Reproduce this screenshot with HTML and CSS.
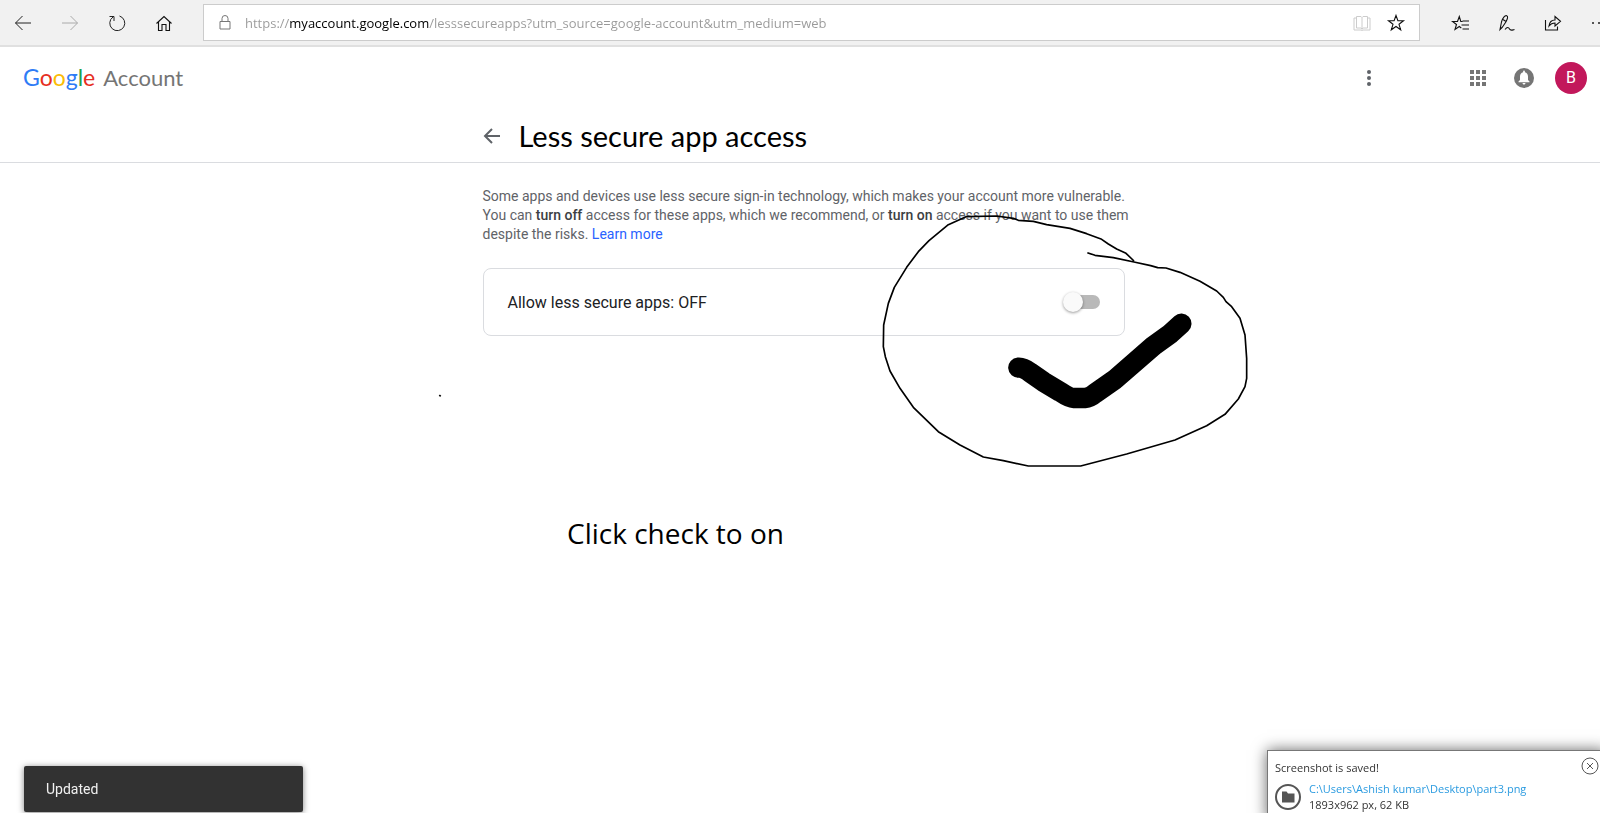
FILE: index.html
```html
<!DOCTYPE html>
<html lang="en">
<head>
    <meta charset="UTF-8">
    <meta name="viewport" content="width=device-width, initial-scale=1.0">
    <title>Less secure app access</title>
    <link rel="stylesheet" href="styles.css">
</head>
<body>
    <div class="window">
        <div class="toolbar">
            <div class="nav-buttons">
                <button class="tool-btn" aria-label="Back"><svg width="20" height="20" viewBox="0 0 20 20"><path d="M18 10H2.500M9.500 3 2.500 10l7 7"/></svg></button>
                <button class="tool-btn disabled" aria-label="Forward" disabled><svg width="20" height="20" viewBox="0 0 20 20"><path d="M2 10h15.500M10.500 3l7 7-7 7"/></svg></button>
                <button class="tool-btn" aria-label="Refresh"><svg width="20" height="20" viewBox="0 0 20 20"><path d="M12.500 3A7.500 7.500 0 1 1 6 4M2.500 3.500h4.500v4.500"/></svg></button>
                <button class="tool-btn" aria-label="Home"><svg width="20" height="20" viewBox="0 0 20 20"><path class="bold" d="M2.500 10.500 10 3.500l7.500 7M4.500 9v8.500h3.500v-6h4v6h3.500V9"/></svg></button>
            </div>
            <div class="address-bar">
                <svg class="lock" width="14" height="18" viewBox="0 0 14 18"><path d="M2 7.500h10v7.500H2zM4 7.500V4.500a3 3 0 0 1 6 0v3"/></svg>
                <input class="url" type="text" aria-label="Address" value="https://myaccount.google.com/lesssecureapps?utm_source=google-account&amp;utm_medium=web">
                <button class="tool-btn reading" aria-label="Reading view"><svg width="20" height="20" viewBox="0 0 20 20"><path d="M4.500 3.500H9l1 1 1-1h4.500v11.500H11l-1 1-1-1H4.500zM10 4.500v12M4.500 5H2v12h7l1 .5 1-.5h7V5h-2.500"/></svg></button>
                <button class="tool-btn" aria-label="Add to favorites"><svg width="20" height="20" viewBox="0 0 20 20"><path class="bold" d="m10 2.500 1.900 5.300h5.600l-4.500 3.500 1.700 5.500-4.700-3.300-4.700 3.300L7 11.300 2.500 7.800h5.600z"/></svg></button>
            </div>
            <div class="side-buttons">
                <button class="tool-btn" aria-label="Favorites"><svg width="20" height="20" viewBox="0 0 20 20"><path class="bold" d="M11.500 8.500H9.800L8.300 3.500 6.500 8.500h-5l4 3-1.500 5 4.300-3 2 1.500M11.500 8h6.500M10.500 12h7.500M11.500 16h6.500"/></svg></button>
                <button class="tool-btn" aria-label="Add notes"><svg width="20" height="20" viewBox="0 0 20 20"><path class="bold" d="M3 16.500 4.500 9C5.500 5 8 2 9.700 2.700s.8 3.300-.7 6L5.500 14zM6 6.500l3 2M3 16.500l2.500-2.500M8 16.500c2-2.500 3.500-2.500 4.500-.5s2.500 1 5 .5"/></svg></button>
                <button class="tool-btn" aria-label="Share"><svg width="20" height="20" viewBox="0 0 20 20"><path class="bold" d="M2.500 7v10h12v-3.500M6 13c.5-4 2.500-6 6-6V3.500l5.500 4.800L12 13V10c-3 0-4.500 1-6 3z"/></svg></button>
                <button class="tool-btn" aria-label="Settings and more"><svg width="20" height="20" viewBox="0 0 20 20"><path class="dots" d="M4 10h.01M10 10h.01M16 10h.01"/></svg></button>
            </div>
        </div>

        <div class="page">
            <header class="account-header">
                <a class="brand" href="#" aria-label="Google Account">
                    <span class="google"><span class="blue">G</span><span class="red">o</span><span class="yellow">o</span><span class="blue">g</span><span class="green">l</span><span class="red">e</span></span>
                    <span class="product">Account</span>
                </a>
                <div class="header-actions">
                    <button class="icon-btn more" aria-label="More"><svg width="24" height="24" viewBox="0 0 24 24"><circle cx="12" cy="6" r="2"/><circle cx="12" cy="12" r="2"/><circle cx="12" cy="18" r="2"/></svg></button>
                    <button class="icon-btn" aria-label="Google apps"><svg width="24" height="24" viewBox="0 0 24 24"><path d="M4 4h4v4H4zM10 4h4v4h-4zM16 4h4v4h-4zM4 10h4v4H4zM10 10h4v4h-4zM16 10h4v4h-4zM4 16h4v4H4zM10 16h4v4h-4zM16 16h4v4h-4z"/></svg></button>
                    <button class="icon-btn" aria-label="Notifications"><svg width="24" height="24" viewBox="0 0 24 24"><circle cx="12" cy="12" r="10"/><path class="bell" d="M12 18.500c.8 0 1.500-.7 1.500-1.500h-3c0 .8.700 1.500 1.500 1.500zM16 14v-3.500c0-2.300-1.200-3.900-3.100-4.300V5.500a.9.9 0 0 0-1.800 0v.7C9.200 6.600 8 8.200 8 10.500V14l-1.500 1.500v.8h11v-.8z"/></svg></button>
                    <button class="avatar" aria-label="Account">B</button>
                </div>
            </header>

            <div class="page-title">
                <div class="column title-row">
                    <a class="back" href="#" aria-label="Back"><svg width="18" height="18" viewBox="0 0 18 18"><path d="M17 9H2.500M9 2 2 9l7 7"/></svg></a>
                    <h1>Less secure app access</h1>
                </div>
            </div>

            <main class="column">
                <p class="intro">Some apps and devices use less secure sign-in technology, which makes your account more vulnerable. You can <strong>turn off</strong> access for these apps, which we recommend, or <strong>turn on</strong> access if you want to use them despite the risks. <a href="#">Learn more</a></p>
                <div class="card">
                    <label for="less-secure">Allow less secure apps: OFF</label>
                    <input class="toggle" type="checkbox" role="switch" id="less-secure">
                </div>
            </main>
        </div>
    </div>

    <!-- hand drawn notes over the page -->
    <svg class="ink" width="400" height="300" viewBox="0 0 1200 900">
        <path class="loop" d="M682 218 705 226 760 233 822 246 872 257 893 263 918 264 960 277 1020 304 1070 333 1090 352 1098 365 1115 380 1140 415 1155 465 1160 535 1160 595 1155 620 1135 657 1095 703 1040 737 945 780 800 822 662 858 505 858 430 842 370 831 300 795 235 755 160 682 120 625 90 573 76 530 70 500 71 435 85 370 103 322 140 262 175 215 207 182 265 134 318 110 410 108 460 115 475 121 520 124 560 134 630 145 680 161 725 178 745 192 770 207 798 220 822 243"/>
        <path class="check" d="M475 563Q490 562 510 577L550 605 600 635Q628 654 640 654H675Q690 653 705 640L765 598 880 498 930 462 964 431"/>
        <path class="loop" d="M-1262 645-1258 649"/>
    </svg>
    <p class="ink-text">Click check to on</p>

    <div class="snackbar" role="status">Updated</div>

    <div class="notice">
        <div class="notice-title">Screenshot is saved!</div>
        <div class="notice-body">
            <svg width="26" height="26" viewBox="0 0 26 26"><circle cx="13" cy="13" r="12"/><path d="M7 7.500h4.500l1.500 2h6.500v9H7z"/></svg>
            <div>
                <a href="#">C:\Users\Ashish kumar\Desktop\part3.png</a>
                <div>1893x962 px, 62 KB</div>
            </div>
        </div>
        <button class="notice-close" aria-label="Close"><svg width="18" height="18" viewBox="0 0 18 18"><circle cx="9" cy="9" r="8"/><path d="m6 6 6 6M12 6l-6 6"/></svg></button>
    </div>
</body>
</html>
```
FILE: styles.css
```css
* {
    margin: 0;
    padding: 0;
    box-sizing: border-box;
}

html {
    overflow: hidden;
}

body {
    min-height: 100vh;
    font-family: Roboto, sans-serif;
    background-color: #fff;
    color: #202124;
    overflow: hidden;
}

button {
    border: none;
    background: none;
    cursor: pointer;
}

a {
    color: #2962ff;
    text-decoration: none;
}

/* the window runs a little past the right edge of the screen */
.window {
    width: calc(100% + 22px);
}

.page {
    margin-right: 15px;
}

/* Browser toolbar */
.toolbar {
    display: flex;
    align-items: center;
    height: 47px;
    background-color: #f1f1f1;
    border-bottom: 2px solid #e0e0e0;
}

.nav-buttons,
.side-buttons {
    display: flex;
}

.nav-buttons {
    gap: 1px;
    width: 203px;
}

.side-buttons {
    margin-left: 18px;
}

.tool-btn {
    display: flex;
    align-items: center;
    justify-content: center;
    width: 46px;
    height: 37px;
}

.tool-btn svg,
.lock {
    fill: none;
    stroke: #222;
}

.tool-btn .dots {
    stroke-width: 2;
    stroke-linecap: round;
}

.tool-btn .bold {
    stroke: #111;
    stroke-width: 1.1;
}

.tool-btn.disabled svg {
    stroke: #aaa;
}

.address-bar {
    flex: 1;
    display: flex;
    align-items: center;
    height: 37px;
    padding: 0 1px 0 14px;
    background-color: #fff;
    border: 1px solid #ccc;
}

.lock {
    stroke: #777;
}

.address-bar .tool-btn {
    width: 34px;
}

.address-bar .tool-btn:last-child {
    margin-right: 5px;
}

.tool-btn.reading svg {
    stroke: #ccc;
}

/* host name is darker than the rest of the address */
.url {
    flex: 1;
    height: 30px;
    margin-left: 13px;
    border: none;
    outline: none;
    font-family: "Open Sans", "Noto Sans", sans-serif;
    font-size: 13px;
    color: transparent;
    background: linear-gradient(to right, #999 45px, #000 45px, #000 184px, #999 184px);
    -webkit-background-clip: text;
    background-clip: text;
}

/* Account header */
.account-header {
    display: flex;
    align-items: center;
    justify-content: space-between;
    height: 61px;
    padding: 0 20px 0 23px;
}

.brand {
    display: flex;
    align-items: baseline;
    gap: 8px;
    padding-bottom: 2px;
    font-family: Lato, sans-serif;
}

.google {
    font-size: 23px;
}

.product {
    font-size: 22px;
    color: #757575;
}

.blue { color: #2f7cf6; }
.red { color: #e62e22; }
.yellow { color: #fbbc05; }
.green { color: #1ea24c; }

.header-actions {
    display: flex;
    align-items: center;
    gap: 22px;
}

.icon-btn {
    width: 24px;
    height: 24px;
}

.icon-btn svg {
    display: block;
    fill: #757575;
}

.more {
    margin-right: 63px;
}

.more svg {
    fill: #5f6368;
}

.icon-btn .bell {
    fill: #fff;
}

.avatar {
    width: 32px;
    height: 32px;
    margin-left: -3px;
    border-radius: 50%;
    background-color: #c2185b;
    color: #fff;
    font-family: Roboto, sans-serif;
    font-size: 16px;
}

/* Title */
.page-title {
    height: 55px;
    border-bottom: 1px solid #dadce0;
}

.column {
    width: 100%;
    max-width: 642px;
    margin: 0 auto;
}

.title-row {
    display: flex;
    align-items: center;
    height: 55px;
    gap: 18px;
}

.back svg {
    display: block;
    fill: none;
    stroke: #5f6368;
    stroke-width: 2;
}

h1 {
    font-family: Lato, sans-serif;
    font-size: 29px;
    font-weight: 400;
    line-height: 36px;
    color: #000;
}

/* Content */
.intro {
    margin: 24px -10px 0 0;
    font-size: 14px;
    line-height: 19px;
    color: #5f6368;
}

.intro strong {
    font-weight: 500;
    color: #3c4043;
}

.card {
    display: flex;
    align-items: center;
    justify-content: space-between;
    height: 68px;
    margin-top: 24px;
    padding: 0 24px;
    border: 1px solid #dadce0;
    border-radius: 8px;
    font-size: 16px;
}

.toggle {
    position: relative;
    width: 34px;
    height: 14px;
    appearance: none;
    border-radius: 7px;
    background-color: #b9b9b9;
    cursor: pointer;
}

.toggle::before {
    content: '';
    position: absolute;
    top: -3px;
    left: -3px;
    width: 20px;
    height: 20px;
    border-radius: 50%;
    background-color: #fafafa;
    box-shadow: 0 1px 3px rgba(0, 0, 0, 0.4);
}

.toggle:checked::before {
    left: 17px;
}

/* Hand drawn notes */
.ink {
    position: absolute;
    top: 180px;
    left: 860px;
    overflow: visible;
    pointer-events: none;
    fill: none;
    stroke: #000;
    stroke-linejoin: round;
}

.loop {
    stroke-width: 5;
}

.check {
    stroke-width: 61;
    stroke-linecap: round;
}

.ink-text {
    position: absolute;
    top: 513px;
    left: 567px;
    font-family: "Open Sans", "Noto Sans", sans-serif;
    font-size: 28px;
    line-height: 40px;
    color: #000;
}

/* Popups */
.snackbar {
    position: fixed;
    left: 24px;
    bottom: 1px;
    width: 279px;
    padding: 0 22px;
    border-radius: 2px;
    background-color: #323232;
    box-shadow: 0 1px 6px rgba(0, 0, 0, 0.5);
    color: #f1f1f1;
    font-size: 14px;
    line-height: 46px;
}

.notice {
    position: fixed;
    right: -6px;
    bottom: -8px;
    width: 339px;
    height: 71px;
    padding: 9px 7px;
    border: 1px solid #777;
    background-color: #fff;
    box-shadow: 0 0 14px rgba(0, 0, 0, 0.6);
    font-family: "Open Sans", "Noto Sans", sans-serif;
    font-size: 11px;
    line-height: 16px;
    color: #333;
}

.notice-body {
    display: flex;
    align-items: center;
    gap: 8px;
    margin-top: 5px;
}

.notice-body svg {
    fill: none;
    stroke: #555;
    stroke-width: 2;
}

.notice-body path {
    fill: #555;
    stroke: none;
}

.notice a {
    color: #2b9be0;
}

.notice-close {
    position: absolute;
    top: 6px;
    right: 6px;
}

.notice-close svg {
    display: block;
    fill: none;
    stroke: #555;
}
```
